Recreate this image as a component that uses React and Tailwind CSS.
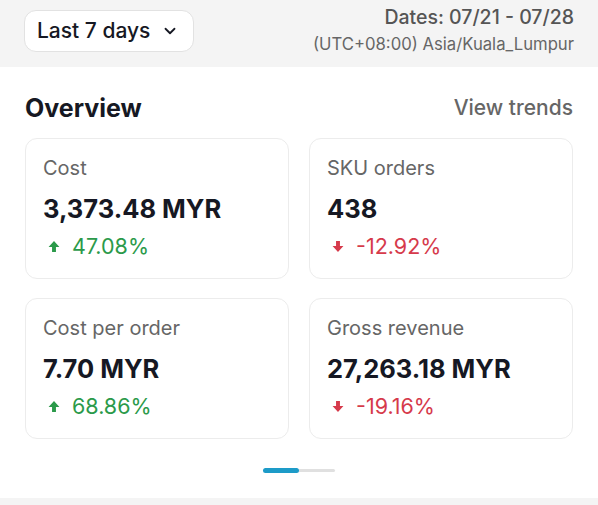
import { ChevronDown } from 'lucide-react';

const metrics = [
  { label: 'Cost', value: '3,373.48 MYR', change: '47.08%', up: true },
  { label: 'SKU orders', value: '438', change: '-12.92%', up: false },
  { label: 'Cost per order', value: '7.70 MYR', change: '68.86%', up: true },
  { label: 'Gross revenue', value: '27,263.18 MYR', change: '-19.16%', up: false },
];

function TrendArrow({ up }) {
  // small filled arrow: head + short stem
  return (
    <svg width="12" height="13" viewBox="0 0 11 12" className={up ? '' : 'rotate-180'}>
      <path d="M5.5 1 L10.5 6.5 H7.3 V11 H3.7 V6.5 H0.5 Z" fill="currentColor" />
    </svg>
  );
}

function MetricCard({ label, value, change, up }) {
  return (
    <div className="h-[141px] rounded-xl border border-[#ececec] bg-white pl-[17px] pt-[16px]">
      <div className="text-[20px] leading-[27px] text-[#666]">{label}</div>
      <div className="mt-[12px] text-[25.5px] font-bold leading-[30px] text-[#161823]">{value}</div>
      <div
        className={
          'mt-[9px] flex items-center gap-[12px] pl-[5px] text-[21.5px] leading-[26px] ' +
          (up ? 'text-[#2b9a4a]' : 'text-[#d63a4b]')
        }
      >
        <TrendArrow up={up} />
        <span>{change}</span>
      </div>
    </div>
  );
}

export default function App() {
  return (
    <div className="w-[598px] bg-white font-['Inter',sans-serif]">
      <header className="flex h-[67px] items-start justify-between bg-[#f4f4f4] px-6">
        <button className="mt-[10px] flex h-[42px] items-center gap-[11px] rounded-xl border border-[#e2e2e2] bg-white pl-[12px] pr-[14px] text-[21px] font-medium text-[#161823]">
          Last 7 days
          <ChevronDown size={18} strokeWidth={2.4} />
        </button>
        <div className="pt-[5px] text-right">
          <div className="text-[19.5px] font-medium leading-[25px] text-[#555]">Dates: 07/21 - 07/28</div>
          <div className="mt-[3px] text-[16.7px] leading-[22px] text-[#666]">(UTC+08:00) Asia/Kuala_Lumpur</div>
        </div>
      </header>

      <section className="px-[25px] pt-[25px]">
        <div className="flex items-center justify-between">
          <h2 className="text-[25px] font-bold leading-[32px] text-[#161823]">Overview</h2>
          <span className="text-[21px] font-medium text-[#666]">View trends</span>
        </div>

        <div className="mt-[14px] grid grid-cols-2 gap-x-5 gap-y-[19px]">
          {metrics.map((m) => (
            <MetricCard key={m.label} {...m} />
          ))}
        </div>

        <div className="flex h-[59px] items-center justify-center pt-[3px]">
          <div className="flex items-center">
            <div className="h-[5px] w-[36px] rounded-full bg-[#1d9bc8]" />
            <div className="h-[3px] w-[36px] rounded-r-full bg-[#e0e0e0]" />
          </div>
        </div>
      </section>

      <div className="h-[8px] bg-[#f4f4f4]" />
    </div>
  );
}
